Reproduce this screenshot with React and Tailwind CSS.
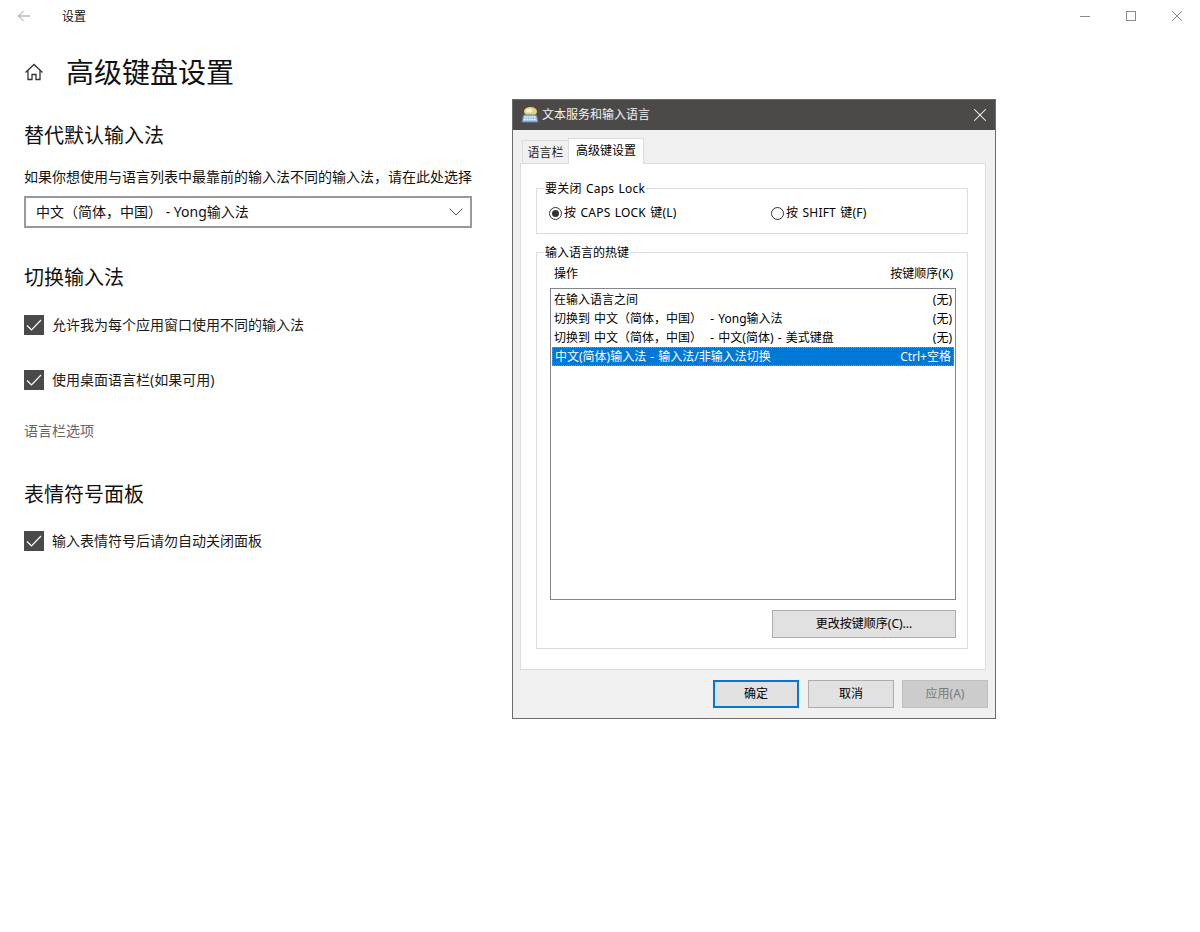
import { ChevronDown, X } from "lucide-react";

const fontClass = "font-['Noto_Sans','Noto_Sans_CJK_SC',sans-serif]";

const hotkeys = [
  { label: "在输入语言之间", keys: "(无)" },
  { label: "切换到 中文（简体，中国）  - Yong输入法", keys: "(无)" },
  { label: "切换到 中文（简体，中国）  - 中文(简体) - 美式键盘", keys: "(无)" },
  { label: "中文(简体)输入法 - 输入法/非输入法切换", keys: "Ctrl+空格", selected: true },
];

const HomeIcon = () => (
  <svg width="20" height="20" viewBox="0 0 20 20" fill="none" stroke="#333" strokeWidth="1.3">
    <path d="M1.5 10.5 10 2.5l8.5 8" />
    <path d="M4 8.5V17.5h4v-5h4v5h4V8.5" />
  </svg>
);

const KeyboardIcon = () => (
  <svg width="18" height="18" viewBox="0 0 18 18">
    <ellipse cx="9.5" cy="5.5" rx="6.5" ry="4.5" fill="#e6d27e" />
    <ellipse cx="8" cy="4.5" rx="3.5" ry="2" fill="#f7efc4" />
    <path d="M2.5 9h13l1.5 7H1z" fill="#a9c6e4" stroke="#5b82ad" />
    <path d="M3 11h12M3 13.5h12" stroke="#ffffff" strokeWidth="1" strokeDasharray="1.5 1" />
  </svg>
);

const Check = ({ label }) => (
  <div className="flex items-center gap-2">
    <span className="flex h-5 w-5 items-center justify-center bg-[#4c4a48]">
      <svg width="16" height="16" viewBox="0 0 16 16" fill="none" stroke="#fff" strokeWidth="1.2">
        <path d="M1 8.5 5.5 13 15 3" />
      </svg>
    </span>
    <span className="text-sm leading-5 text-[#1a1a1a]">{label}</span>
  </div>
);

const Radio = ({ checked, label, className }) => (
  <div className={`flex items-center gap-[2px] ${className}`}>
    <span className="flex h-[13px] w-[13px] items-center justify-center rounded-full border border-[#333] bg-white">
      {checked && <span className="h-[7px] w-[7px] rounded-full bg-[#333]" />}
    </span>
    <span className="tracking-[0.2px]">{label}</span>
  </div>
);

const Group = ({ title, className, children }) => (
  <fieldset className={`border border-[#dcdcdc] ${className}`}>
    <legend className="ml-[7px] px-px text-xs leading-[14px]">
      <span className="relative top-px">{title}</span>
    </legend>
    {children}
  </fieldset>
);

const DialogButton = ({ children, className = "" }) => (
  <button className={`h-7 text-xs ${className}`}>{children}</button>
);

const Dialog = () => (
  <div className="absolute left-[512px] top-[99px] flex h-[620px] w-[484px] flex-col border border-[#6b6b6b] bg-[#f0f0f0] text-xs text-black [word-spacing:1px]">
    <div className="flex h-[30px] shrink-0 items-center bg-[#4c4a48] pl-2 pr-1 text-[#f2f2f2]">
      <KeyboardIcon />
      <span className="ml-[3px] flex-1 text-xs">文本服务和输入语言</span>
      <X size={22} strokeWidth={1.1} color="#fff" />
    </div>

    <div className="relative flex h-[33px] shrink-0 items-end pl-[9px]">
      <div className="h-[23px] w-[47px] border border-b-0 border-[#dcdcdc] text-center leading-[23px] text-[#222]">语言栏</div>
      <div className="relative -left-px top-px z-10 h-[26px] w-[76px] border border-b-0 border-[#dcdcdc] bg-white text-center leading-[24px]">高级键设置</div>
    </div>

    <div className="mx-[7px] mr-[9px] h-[507px] border border-[#dcdcdc] bg-white px-[15px] pt-[17px]">
      <Group title={<span className="tracking-[0.2px]">要关闭 Caps Lock</span>} className="h-[53px] w-[432px]">
        <div className="flex pl-3 pt-[10px]">
          <Radio checked label="按 CAPS LOCK 键(L)" className="w-[222px]" />
          <Radio label="按 SHIFT 键(F)" />
        </div>
      </Group>

      <Group title="输入语言的热键" className="mt-[11px] h-[404px] w-[432px]">
        <div className="flex justify-between pl-[17px] pr-[14px] pt-[7px] leading-4">
          <span>操作</span>
          <span>按键顺序(K)</span>
        </div>
        <div className="ml-[13px] mt-[6px] h-[312px] w-[406px] border border-[#82878f] bg-white px-px pt-px">
          {hotkeys.map((row) => (
            <div
              key={row.label}
              className={`flex h-[19px] items-center justify-between px-[2px] leading-4 ${
                row.selected ? "border border-dotted border-[#c98a3c] bg-[#0078d7] text-white" : ""
              }`}
            >
              <span className="whitespace-pre">{row.label}</span>
              <span>{row.keys}</span>
            </div>
          ))}
        </div>
        <div className="mr-[11px] mt-[10px] flex justify-end">
          <DialogButton className="w-[184px] border border-[#adadad] bg-[#e1e1e1]">更改按键顺序(C)...</DialogButton>
        </div>
      </Group>
    </div>

    <div className="flex justify-end pr-[7px] pt-[10px]">
      <DialogButton className="mr-[9px] w-[86px] border-2 border-[#0078d7] bg-[#e1e1e1]">确定</DialogButton>
      <DialogButton className="mr-2 w-[86px] border border-[#adadad] bg-[#e1e1e1]">取消</DialogButton>
      <DialogButton className="w-[86px] border border-[#bfbfbf] bg-[#cccccc] text-[#7a7a7a]">应用(A)</DialogButton>
    </div>
  </div>
);

export default function App() {
  return (
    <div className={`relative h-[932px] w-[1200px] overflow-hidden bg-white ${fontClass}`}>
      <div className="flex h-8 items-center">
        <div className="flex w-[62px] pl-[17px]">
          <svg width="14" height="12" viewBox="0 0 14 12" fill="none" stroke="#999" strokeWidth="1">
            <path d="M13 6H1.5M6.5 1 1.5 6l5 5" />
          </svg>
        </div>
        <span className="relative top-px flex-1 text-xs text-[#111]">设置</span>
        <div className="flex items-center gap-9 pr-[18px]">
          <svg width="10" height="10" viewBox="0 0 10 10" fill="none" stroke="#8a8a8a">
            <path d="M0 5.5h10" />
          </svg>
          <svg width="10" height="10" viewBox="0 0 10 10" fill="none" stroke="#8a8a8a">
            <rect x="0.5" y="0.5" width="9" height="9" />
          </svg>
          <svg width="10" height="10" viewBox="0 0 10 10" fill="none" stroke="#8a8a8a">
            <path d="M0 0l10 10M10 0 0 10" />
          </svg>
        </div>
      </div>

      <div className="flex items-center pl-6 pt-[19px]">
        <HomeIcon />
        <h1 className="ml-[22px] text-[28px] font-normal leading-[42px] text-[#111]">高级键盘设置</h1>
      </div>

      <div className="pl-6">
        <h2 className="mt-[29px] text-xl leading-7 text-[#111]">替代默认输入法</h2>
        <p className="mt-[17px] text-sm leading-5 text-[#111]">
          如果你想使用与语言列表中最靠前的输入法不同的输入法，请在此处选择
        </p>
        <div className="mt-[9px] flex h-8 w-[448px] items-center justify-between border-2 border-[#999] pl-[10px] pr-[2px] text-sm text-[#111]">
          <span className="whitespace-pre">中文（简体，中国） - Yong输入法</span>
          <ChevronDown size={24} strokeWidth={1} color="#555" />
        </div>

        <h2 className="mt-9 text-xl leading-7 text-[#111]">切换输入法</h2>
        <div className="mt-[23px]">
          <Check label="允许我为每个应用窗口使用不同的输入法" />
        </div>
        <div className="mt-[35px]">
          <Check label="使用桌面语言栏(如果可用)" />
        </div>
        <p className="mt-[31px] text-sm leading-5 text-[#666]">语言栏选项</p>

        <h2 className="mt-10 text-xl leading-7 text-[#111]">表情符号面板</h2>
        <div className="mt-[22px]">
          <Check label="输入表情符号后请勿自动关闭面板" />
        </div>
      </div>

      <Dialog />
    </div>
  );
}
